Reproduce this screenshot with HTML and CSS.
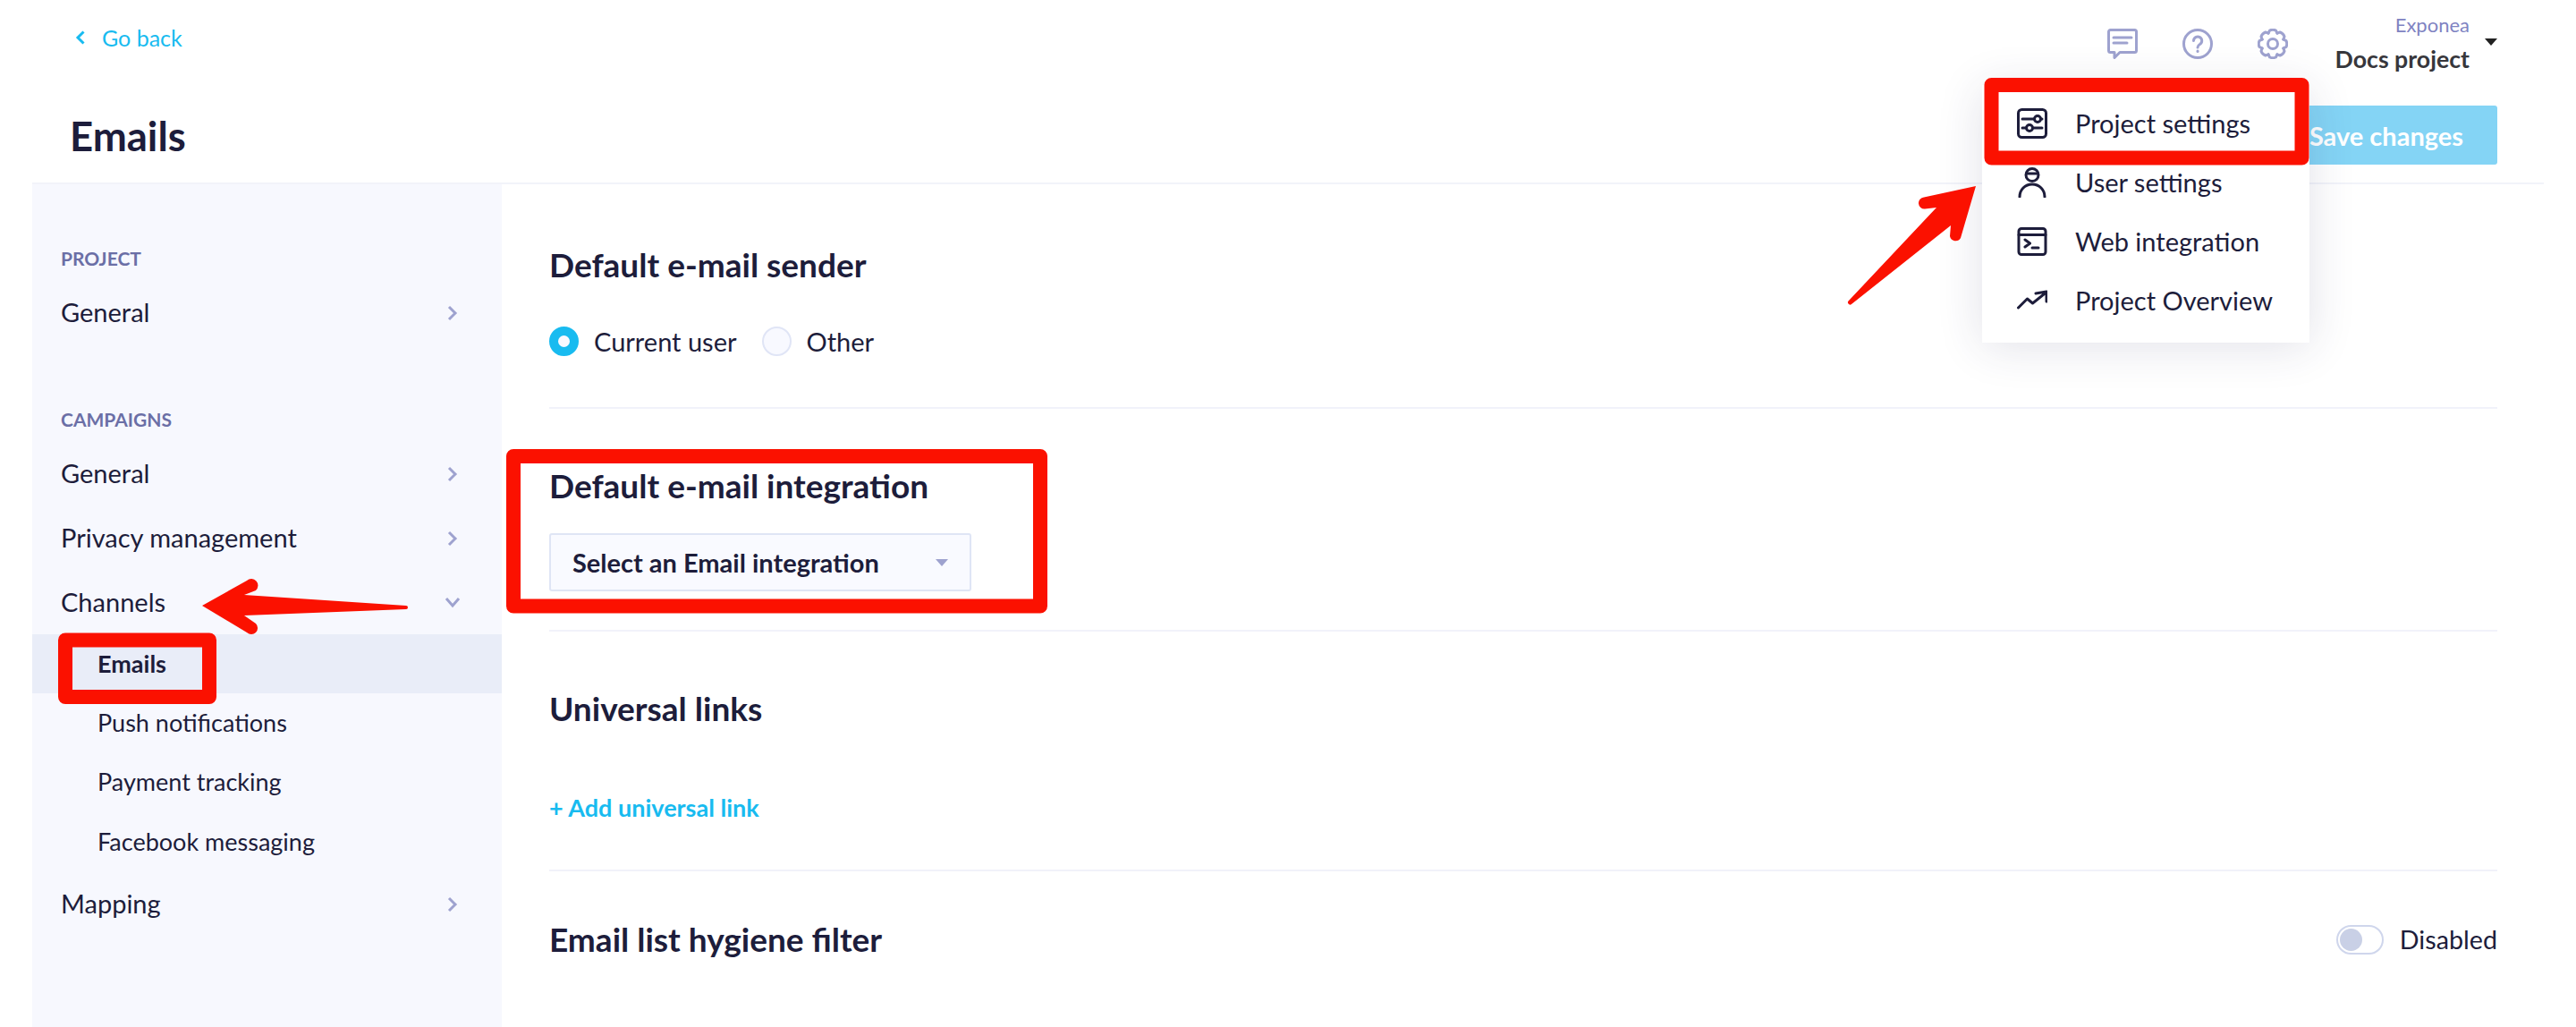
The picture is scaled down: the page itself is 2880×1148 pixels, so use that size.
FILE: index.html
```html
<!DOCTYPE html>
<html lang="en">
<head>
    <meta charset="UTF-8">
    <meta name="viewport" content="width=device-width, initial-scale=1.0">
    <title>Emails</title>
    <link rel="stylesheet" href="styles.css">
</head>
<body>

    <!-- Top bar -->
    <div class="topbar">
        <a class="back">
            <svg class="back-icon" width="12" height="16" viewBox="0 0 12 16"><path d="M9.5 1.5 3 8l6.5 6.5"/></svg>
            Go back
        </a>
        <div class="top-right">
            <div class="top-icons">
                <svg class="top-icon" width="34" height="34" viewBox="0 0 34 34">
                    <path d="M3.5 1.5h27a2 2 0 0 1 2 2v21a2 2 0 0 1-2 2H14l-6 6v-6H3.5a2 2 0 0 1-2-2v-21a2 2 0 0 1 2-2z"/>
                    <path d="M7 10h20M7 16h15"/>
                </svg>
                <svg class="top-icon" width="34" height="34" viewBox="0 0 34 34">
                    <circle cx="17" cy="17" r="15.5"/>
                    <path d="M12.5 13.5a4.6 4.6 0 1 1 7 4c-1.700 1-2.500 1.800-2.500 3.500"/>
                    <path d="M17 25v.5"/>
                </svg>
                <svg class="top-icon" width="34" height="34" viewBox="-17 -17 34 34">
                    <defs><path id="tooth" d="M-5 -11.800 L-3.400 -15 Q0 -16.500 3.400 -15 L5 -11.800"/></defs>
                    <use href="#tooth"/>
                    <use href="#tooth" transform="rotate(45)"/>
                    <use href="#tooth" transform="rotate(90)"/>
                    <use href="#tooth" transform="rotate(135)"/>
                    <use href="#tooth" transform="rotate(180)"/>
                    <use href="#tooth" transform="rotate(225)"/>
                    <use href="#tooth" transform="rotate(270)"/>
                    <use href="#tooth" transform="rotate(315)"/>
                    <circle r="5.500"/>
                </svg>
            </div>
            <div class="project-name">
                <div class="company">Exponea</div>
                <div class="project">Docs project</div>
            </div>
            <span class="caret"></span>
        </div>
    </div>

    <!-- Title row -->
    <div class="title-row">
        <h1>Emails</h1>
        <button class="save">Save changes</button>
    </div>

    <div class="layout">
        <!-- Left menu -->
        <div class="sidebar">
            <div class="side-label">PROJECT</div>
            <div class="side-item">General
                <svg class="chev" width="12" height="20" viewBox="0 0 12 20"><path d="M2 3l7 7-7 7"/></svg>
            </div>

            <div class="side-label second">CAMPAIGNS</div>
            <div class="side-item">General
                <svg class="chev" width="12" height="20" viewBox="0 0 12 20"><path d="M2 3l7 7-7 7"/></svg>
            </div>
            <div class="side-item">Privacy management
                <svg class="chev" width="12" height="20" viewBox="0 0 12 20"><path d="M2 3l7 7-7 7"/></svg>
            </div>
            <div class="side-item">Channels
                <svg class="chev-down" width="18" height="13" viewBox="0 0 18 13"><path d="M2 2l7 8 7-8"/></svg>
            </div>
            <div class="side-sub active">Emails</div>
            <div class="side-sub">Push notifications</div>
            <div class="side-sub">Payment tracking</div>
            <div class="side-sub">Facebook messaging</div>
            <div class="side-item">Mapping
                <svg class="chev" width="12" height="20" viewBox="0 0 12 20"><path d="M2 3l7 7-7 7"/></svg>
            </div>
        </div>

        <!-- Settings -->
        <div class="content">
            <div class="section sender">
                <h2>Default e-mail sender</h2>
                <div class="radios">
                    <span class="radio on"></span>
                    <span class="radio-text">Current user</span>
                    <span class="radio"></span>
                    <span class="radio-text">Other</span>
                </div>
            </div>
            <div class="section integration">
                <h2>Default e-mail integration</h2>
                <div class="select">
                    Select an Email integration
                    <span class="select-caret"></span>
                </div>
            </div>
            <div class="section links">
                <h2>Universal links</h2>
                <a class="add-link">+ Add universal link</a>
            </div>
            <div class="section hygiene">
                <h2>Email list hygiene filter</h2>
                <div class="toggle-wrap">
                    <span class="toggle"><span class="knob"></span></span>
                    Disabled
                </div>
            </div>
        </div>
    </div>

    <!-- Settings menu -->
    <div class="dropdown">
        <div class="menu-item">
            <svg class="menu-icon" width="34" height="34" viewBox="0 0 34 34">
                <rect x="1.500" y="1.500" width="31" height="31" rx="4"/>
                <path d="M6 12h13M26.500 12H28M6 22h4.500M17.500 22H28"/>
                <circle cx="23" cy="12" r="3.500"/>
                <circle cx="14" cy="22" r="3.500"/>
            </svg>
            Project settings
        </div>
        <div class="menu-item">
            <svg class="menu-icon" width="34" height="34" viewBox="0 0 34 34">
                <circle cx="17" cy="8.500" r="7"/>
                <path d="M10.500 7h13M3 33c0-8 6-14 14-14s14 6 14 14"/>
            </svg>
            User settings
        </div>
        <div class="menu-item">
            <svg class="menu-icon" width="34" height="34" viewBox="0 0 34 34">
                <rect x="2" y="2.500" width="30" height="29" rx="3"/>
                <path d="M2 9.500h30M9 15l5.500 4-5.500 4M17 24h7"/>
            </svg>
            Web integration
        </div>
        <div class="menu-item">
            <svg class="menu-icon" width="34" height="34" viewBox="0 0 34 34">
                <path d="M1.500 25l10-10 6 5 15-12M21 9l12-2v11"/>
            </svg>
            Project Overview
        </div>
    </div>

    <!-- Red marks drawn on top of the screenshot -->
    <svg class="marks" width="2880" height="1148" viewBox="0 0 2880 1148">
        <rect class="mark-box" x="574" y="510" width="589" height="167.500"/>
        <rect class="mark-box" x="2226.500" y="95" width="347" height="81.500"/>
        <rect class="mark-box" x="73" y="715.500" width="161" height="63.500"/>
        <path class="mark-arrow" d="M226 677L276 649A7 7 0 0 1 286 660L273 665L454 677A2 2 0 0 1 454 681L273 688L286 697A7 7 0 0 1 276 707Z"/>
        <path class="mark-arrow" d="M2209 208L2151 220.500A6.500 6.500 0 0 0 2152 233.500L2165 232L2067 336A2.500 2.500 0 0 0 2070 340L2181 252L2180 264A6.500 6.500 0 0 0 2192 266Z"/>
    </svg>

</body>
</html>
```

FILE: styles.css
```css
* {
    box-sizing: border-box;
}

body {
    margin: 0;
    width: 2880px;
    height: 1148px;
    overflow: hidden;
    position: relative;
    background: #fff;
    color: #1d1d3b;
    font-family: Lato, "Open Sans", sans-serif;
    font-size: 29px;
}

/* Top bar */
.topbar {
    display: flex;
    justify-content: space-between;
    height: 98px;
    padding: 0 88px 0 84px;
}

.back {
    display: flex;
    align-items: center;
    gap: 18px;
    height: 84px;
    color: #18bbf0;
    font-size: 25px;
}

.back-icon {
    fill: none;
    stroke: #18bbf0;
    stroke-width: 3;
}

.top-right {
    display: flex;
    align-items: flex-start;
}

.top-icons {
    display: flex;
    gap: 50px;
    padding-top: 32px;
    margin-right: 53px;
}

.top-icon {
    fill: none;
    stroke: #9ea2cf;
    stroke-width: 3;
    stroke-linecap: round;
    stroke-linejoin: round;
}

.project-name {
    padding-top: 13px;
    text-align: right;
}

.company {
    height: 30px;
    line-height: 30px;
    color: #7f83c2;
    font-size: 22px;
}

.project {
    height: 44px;
    margin-top: 1px;
    line-height: 44px;
    color: #37373c;
    font-size: 26.700px;
    font-weight: 700;
}

.caret {
    width: 0;
    height: 0;
    margin: 43px 0 0 17px;
    border-left: 7px solid transparent;
    border-right: 7px solid transparent;
    border-top: 8px solid #222;
}

/* Title row */
.title-row {
    display: flex;
    justify-content: space-between;
    align-items: center;
    height: 108px;
    margin: 0 36px;
    padding: 0 52px 0 42px;
    border-bottom: 2px solid #f2f3fa;
}

h1 {
    margin: 0;
    font-size: 45.500px;
    font-weight: 700;
}

.save {
    width: 248px;
    height: 66px;
    border: 0;
    border-radius: 3px;
    background: #84d4f5;
    color: #fff;
    font-family: inherit;
    font-size: 29px;
    font-weight: 700;
}

.layout {
    display: flex;
    height: 942px;
    margin: 0 36px;
}

/* Left menu */
.sidebar {
    width: 525px;
    padding-top: 66px;
    background: #f7f8fe;
}

.side-label {
    height: 34px;
    margin-bottom: 7px;
    padding-left: 32px;
    line-height: 34px;
    color: #6b6fa6;
    font-size: 21px;
    font-weight: 700;
}

.side-label.second {
    margin-top: 67px;
}

.side-item {
    display: flex;
    justify-content: space-between;
    align-items: center;
    height: 72px;
    padding: 0 49px 2px 32px;
}

.chev {
    margin-top: 3px;
    fill: none;
    stroke: #9ea2cf;
    stroke-width: 3;
}

.chev-down {
    margin: 3px -3px 0 0;
    fill: none;
    stroke: #9ea2cf;
    stroke-width: 3;
}

.side-sub {
    display: flex;
    align-items: center;
    height: 66.300px;
    padding: 0 0 2px 73px;
    font-size: 27px;
}

.side-sub.active {
    background: #e9edf8;
    font-weight: 700;
}

/* Settings */
.content {
    flex: 1;
    padding: 0 52px 0 53px;
}

.section {
    border-bottom: 2px solid #f1f2fa;
}

h2 {
    margin: 0;
    height: 44px;
    line-height: 44px;
    font-size: 37px;
    font-weight: 700;
}

.sender {
    height: 251px;
    padding-top: 68px;
}

.radios {
    display: flex;
    align-items: center;
    height: 44px;
    margin-top: 41px;
}

.radio {
    width: 33px;
    height: 33px;
    margin-right: 17px;
    border: 2px solid #e0e5f6;
    border-radius: 50%;
    background: #f8f9ff;
}

.radio.on {
    border: 10px solid #18bbf0;
}

.radio-text {
    margin-right: 28px;
}

.integration {
    height: 249px;
    padding-top: 64px;
}

.select {
    display: flex;
    justify-content: space-between;
    align-items: center;
    width: 472px;
    height: 65px;
    margin-top: 31px;
    padding: 0 24px;
    border: 2px solid #dfe5f5;
    border-radius: 3px;
    background: #f9faff;
    font-weight: 700;
}

.select-caret {
    width: 0;
    height: 0;
    border-left: 7px solid transparent;
    border-right: 7px solid transparent;
    border-top: 8px solid #9ea2cf;
}

.links {
    height: 268px;
    padding-top: 64px;
}

.add-link {
    display: block;
    height: 44px;
    margin-top: 67px;
    line-height: 44px;
    color: #18bbf0;
    font-size: 27px;
    font-weight: 700;
}

.hygiene {
    display: flex;
    justify-content: space-between;
    align-items: center;
    height: 44px;
    margin-top: 54px;
    border-bottom: 0;
}

.toggle-wrap {
    display: flex;
    align-items: center;
    gap: 18px;
    font-size: 28.700px;
}

.toggle {
    display: flex;
    align-items: center;
    width: 53px;
    height: 33px;
    padding-left: 2px;
    border: 2px solid #cfd6ec;
    border-radius: 17px;
}

.knob {
    width: 25px;
    height: 25px;
    border-radius: 50%;
    background: #c9d0e6;
}

/* Settings menu */
.dropdown {
    position: absolute;
    top: 95px;
    left: 2216px;
    width: 366px;
    padding: 10px 0 14px;
    background: #fff;
    box-shadow: 0 4px 48px rgba(40, 40, 90, 0.14);
}

.menu-item {
    display: flex;
    align-items: center;
    gap: 31px;
    height: 66px;
    padding: 0 0 2px 39px;
}

.menu-icon {
    margin-top: 2px;
    fill: none;
    stroke: #1d1d3b;
    stroke-width: 3;
    stroke-linecap: round;
    stroke-linejoin: round;
}

/* Red marks */
.marks {
    position: absolute;
    top: 0;
    left: 0;
}

.mark-box {
    fill: none;
    stroke: #fb1100;
    stroke-width: 16;
    stroke-linejoin: round;
}

.mark-arrow {
    fill: #fb1100;
}
```
